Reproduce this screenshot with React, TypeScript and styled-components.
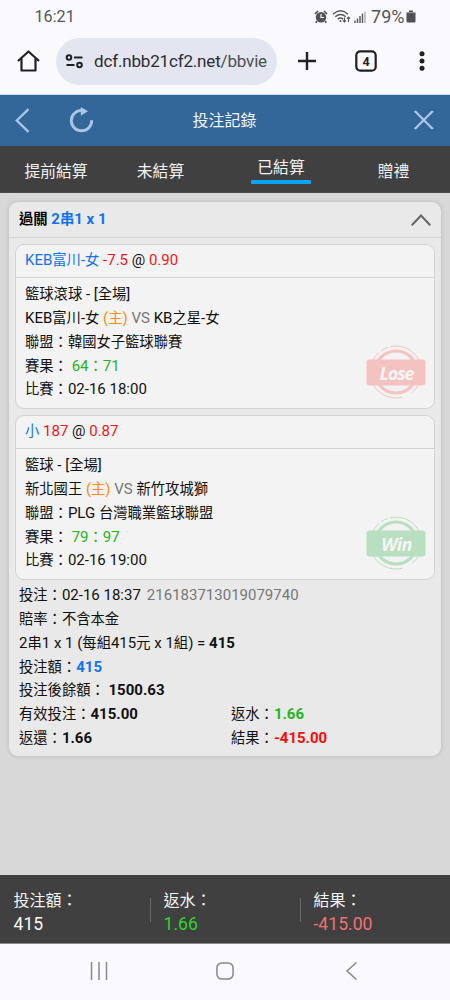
import React from "react";
import styled, { createGlobalStyle } from "styled-components";

const Global = createGlobalStyle`
  * { box-sizing: border-box; }
  body {
    margin: 0;
    background: #d8d8d8;
    font-family: Roboto, "Noto Sans CJK TC", sans-serif;
    color: #111;
  }
`;

const Screen = styled.div`
  width: 450px;
  height: 1000px;
  display: flex;
  flex-direction: column;
  overflow: hidden;
`;

const BrowserChrome = styled.header`
  height: 95px;
  flex: none;
  background: #faf9fe;
  border-bottom: 1px solid #cfdcf0;
`;

const StatusBar = styled.div`
  height: 37px;
  padding: 0 34px 4px 34.5px;
  display: flex;
  align-items: center;
  justify-content: space-between;
  font-size: 16.2px;
  line-height: 20px;
  color: #55555a;
`;

const StatusIcons = styled.div`
  display: flex;
  align-items: center;
`;

const Battery = styled.span`
  margin-left: 5px;
  display: flex;
  align-items: center;
  gap: 1.5px;
  font-size: 18px;
  white-space: nowrap;
  svg { flex: none; }
`;

const AddressRow = styled.div`
  height: 48px;
  display: flex;
  align-items: center;
  padding: 0 20px 0 17px;
`;

const AddressPill = styled.div`
  width: 221px;
  height: 47px;
  margin: 0 20px 0 16px;
  padding: 0 9px;
  border-radius: 24px;
  background: #e3e6f0;
  display: flex;
  align-items: center;
  gap: 10px;
  font-size: 17px;
  letter-spacing: -0.17px;
  color: #2b2c31;
  svg { flex: none; }
`;

const Url = styled.span`
  white-space: nowrap;
  span { color: #4c4d53; }
`;

const Spacer = styled.span<{ $w: number }>`
  flex: none;
  width: ${(p) => p.$w}px;
`;

const TitleBar = styled.div`
  height: 51px;
  flex: none;
  background: #336699;
  padding: 0 15px 0 14px;
  display: grid;
  grid-template-columns: 100px 1fr 100px;
  align-items: center;
  color: #a9c6e6;
`;

const TitleActions = styled.div<{ $end?: boolean }>`
  display: flex;
  align-items: center;
  gap: 37px;
  justify-content: ${(p) => (p.$end ? "flex-end" : "flex-start")};
`;

const Title = styled.h1`
  margin: 0;
  font-size: 16px;
  font-weight: 400;
  line-height: 24px;
  text-align: center;
  color: #f4f7fb;
`;

const Tabs = styled.nav`
  height: 47px;
  flex: none;
  background: #404040;
  display: grid;
  grid-template-columns: 112px 97px 144px 81px;
  border-bottom: 1px solid #4a4a4a;
`;

const Tab = styled.div<{ $active?: boolean }>`
  display: flex;
  flex-direction: column;
  align-items: center;
  padding-top: ${(p) => (p.$active ? 10 : 14)}px;
  font-size: 15.8px;
  line-height: 24px;
  color: #f2f2f2;
  &::after {
    content: "";
    display: ${(p) => (p.$active ? "block" : "none")};
    width: 60px;
    height: 3.5px;
    border-radius: 1px;
    background: #0aa5f5;
  }
`;

const Content = styled.main`
  height: 682px;
  flex: none;
  padding: 9px 9px 0;
  background: #d8d8d8;
`;

const TicketCard = styled.section`
  width: 432px;
  height: 554px;
  border-radius: 9px;
  background: #e9e9e9;
  box-shadow: 0 0 5px rgba(0, 0, 0, 0.14);
  font-size: 14.3px;
  line-height: 23.85px;
`;

const TicketHeader = styled.div`
  height: 36px;
  padding: 0 10px;
  border-bottom: 1px solid #d3d3d3;
  display: flex;
  align-items: center;
  justify-content: space-between;
  font-weight: 700;
  color: #000;
`;

const Legs = styled.div`
  padding: 6px 6px 0;
  display: flex;
  flex-direction: column;
  gap: 6px;
`;

const Leg = styled.article`
  position: relative;
  height: 165px;
  border: 1px solid #d3d3d3;
  border-radius: 9px;
  background: #f3f3f3;
`;

const LegHeader = styled.div`
  height: 33px;
  padding: 4px 9px 0;
  border-bottom: 1px solid #d3d3d3;
`;

const LegBody = styled.div`
  padding: 5px 9px 0;
`;

const Line = styled.div`
  height: 23.85px;
  white-space: pre;
`;

const Latin = styled.span`
  font-size: 15px;
  line-height: 20px;
`;

const TicketNumber = styled.span`
  margin-left: 6px;
`;

const Stamp = styled.div`
  position: absolute;
  right: 8px;
  bottom: 9px;
  width: 60px;
  height: 54px;
`;

const Summary = styled.div`
  padding: 4px 10px 0;
`;

const SplitLine = styled(Line)`
  display: grid;
  grid-template-columns: 212px 1fr;
`;

type Tone = "blue" | "red" | "loss" | "green" | "orange" | "gray";
const tones: Record<Tone, string> = {
  blue: "#1472f2",
  red: "#f51616",
  loss: "#fb0a0a",
  green: "#25b51e",
  orange: "#fb8c12",
  gray: "#777",
};

const InkSpan = styled.span<{ $tone?: Tone; $bold?: boolean }>`
  color: ${(p) => (p.$tone ? tones[p.$tone] : "inherit")};
  font-weight: ${(p) => (p.$bold ? 700 : "inherit")};
`;

/* Latin letters and digits are set slightly larger than the Chinese text. */
function Ink({ tone, bold, children }: { tone?: Tone; bold?: boolean; children: string }) {
  return (
    <InkSpan $tone={tone} $bold={bold}>
      {children
        .split(/([\x20-\x7e]+)/)
        .filter(Boolean)
        .map((run, i) => (/^[\x20-\x7e]/.test(run) ? <Latin key={i}>{run}</Latin> : run))}
    </InkSpan>
  );
}

const Totals = styled.footer`
  height: 69px;
  flex: none;
  background: #404040;
  border-bottom: 1px solid #8b8b8e;
  display: grid;
  grid-template-columns: repeat(3, 150px);
`;

const Total = styled.div<{ $color: string }>`
  padding: 14px 0 0 13.5px;
  background: linear-gradient(#686868, #686868) left 23px / 1px 24px no-repeat;
  font-size: 16px;
  line-height: 24px;
  color: #f4f4f4;
  &:first-child { background: none; }
  strong {
    display: block;
    font-weight: 400;
    font-size: 17.6px;
    line-height: 23px;
    color: ${(p) => p.$color};
  }
`;

const SystemNav = styled.div`
  height: 56px;
  flex: none;
  background: #faf9fe;
  display: flex;
  align-items: center;
  justify-content: center;
  gap: 108px;
  padding: 0 0 2px 0;
`;

function ResultStamp({ label }: { label: "Lose" | "Win" }) {
  const color = label === "Lose" ? "#f5c2c2" : "#b8dfbf";
  return (
    <Stamp>
      <svg width="60" height="54" viewBox="0 0 60 54">
        <g fill="none" stroke={color}>
          <circle cx="30" cy="27" r="21" strokeWidth="3" />
          <path
            strokeWidth="1"
            d="M24 1.9A26 26 0 0 1 54 17M15 5.8A26 26 0 0 1 22 2.4M6 17A26 26 0 0 1 13 7.3M6 37A26 26 0 0 0 36 52.3M54 37A26 26 0 0 1 45.500 47.900"
          />
        </g>
        <rect x="0.500" y="14.500" width="59" height="26" rx="3" fill={color} />
        <text
          x="30.500"
          y="34.500"
          textAnchor="middle"
          fontFamily="Open Sans, Noto Sans, sans-serif"
          fontSize="18"
          letterSpacing={label === "Lose" ? -1.1 : -0.6}
          fontStyle="italic"
          fontWeight="700"
          fill="#f6f5f3"
        >
          {label}
        </text>
      </svg>
    </Stamp>
  );
}

interface LegData {
  pick: string;
  line: string;
  odds: string;
  market: string;
  home: string;
  away: string;
  league: string;
  score: string;
  time: string;
  result: "Lose" | "Win";
}

const legs: LegData[] = [
  {
    pick: "KEB富川-女",
    line: "-7.5",
    odds: "0.90",
    market: "籃球滾球 - [全場]",
    home: "KEB富川-女",
    away: "KB之星-女",
    league: "韓國女子籃球聯賽",
    score: "64：71",
    time: "02-16 18:00",
    result: "Lose",
  },
  {
    pick: "小",
    line: "187",
    odds: "0.87",
    market: "籃球 - [全場]",
    home: "新北國王",
    away: "新竹攻城獅",
    league: "PLG 台灣職業籃球聯盟",
    score: "79：97",
    time: "02-16 19:00",
    result: "Win",
  },
];

function LegCard({ leg }: { leg: LegData }) {
  return (
    <Leg>
      <LegHeader>
        <Line>
          <Ink tone="blue">{leg.pick}</Ink>
          <Ink tone="red">{` ${leg.line}`}</Ink>
          <Ink>{" @ "}</Ink>
          <Ink tone="red">{leg.odds}</Ink>
        </Line>
      </LegHeader>
      <LegBody>
        <Line>
          <Ink>{leg.market}</Ink>
        </Line>
        <Line>
          <Ink>{`${leg.home} `}</Ink>
          <Ink tone="orange">(主)</Ink>
          <Ink tone="gray">{" VS "}</Ink>
          <Ink>{leg.away}</Ink>
        </Line>
        <Line>
          <Ink>{`聯盟：${leg.league}`}</Ink>
        </Line>
        <Line>
          <Ink>{"賽果： "}</Ink>
          <Ink tone="green">{leg.score}</Ink>
        </Line>
        <Line>
          <Ink>{`比賽：${leg.time}`}</Ink>
        </Line>
      </LegBody>
      <ResultStamp label={leg.result} />
    </Leg>
  );
}

export default function App() {
  return (
    <Screen lang="zh-TW">
      <Global />
      <BrowserChrome>
        <StatusBar>
          <span>16:21</span>
          <StatusIcons>
            <svg width="14" height="14" viewBox="0 0 14 14">
              <circle cx="7" cy="7.200" r="5.200" fill="#505055" />
              <path d="M1 4 4 1M10 1l3 3M3 11l-1.200 1.800M11 11l1.200 1.800" stroke="#505055" strokeWidth="1.700" />
              <path d="M7 4v3.500h3" fill="none" stroke="#faf9fe" strokeWidth="1.200" />
            </svg>
            <Spacer $w={4} />
            <svg width="20" height="15" viewBox="0 0 20 15" fill="none" stroke="#55555a" strokeWidth="1.300">
              <path d="M1 5.200q7.500-7 15 0M3.300 7.800q5.200-4.600 10.400 0M5.700 10.200q2.800-2.400 5.600 0" />
              <circle cx="8.500" cy="12" r="1" fill="#55555a" stroke="none" />
              <path d="M12.500 8.500v4.500m-1.700-1.700 1.700 1.700 1.500-1.600M16.500 13V8m-1.600 1.700L16.500 8l1.600 1.700" strokeWidth="1.100" />
            </svg>
            <Spacer $w={2} />
            <svg width="12" height="14" viewBox="0 0 12 14">
              <path d="M1 10.500V13M3.500 8.500V13M6 6V13M8.500 3.500V13" stroke="#606065" strokeWidth="1.500" />
              <path d="M11 1.500V13" stroke="#b4b4b9" strokeWidth="1.500" />
            </svg>
            <Battery>
              79%
              <svg width="10" height="13" viewBox="0 0 10 13">
                <path d="M3 .5h4V2h1.500q1 0 1 1v8.500q0 1-1 1h-7q-1 0-1-1V3q0-1 1-1H3z" fill="#505055" />
                <path d="M1 2.600h8" stroke="#9b9ba0" strokeWidth="1.200" />
              </svg>
            </Battery>
          </StatusIcons>
        </StatusBar>
        <AddressRow>
          <svg width="23" height="24" viewBox="0 0 23 24" fill="none" stroke="#202126" strokeWidth="2.200" strokeLinejoin="round">
            <path d="M1 12 11.500 2.500 22 12M4.500 9.800v11.700h14V9.800" />
          </svg>
          <AddressPill>
            <svg width="19" height="15" viewBox="0 0 19 15" fill="none" stroke="#202126" strokeWidth="2">
              <circle cx="4" cy="3.500" r="2.300" />
              <path d="M9 3.500h8.500M1.500 11H9.500" />
              <circle cx="14.500" cy="11" r="2.300" />
            </svg>
            <Url>
              dcf.nbb21cf2.net<span>/bbvie</span>
            </Url>
          </AddressPill>
          <svg width="20" height="20" viewBox="0 0 20 20" stroke="#202126" strokeWidth="2.400">
            <path d="M10 1v18M1 10h18" />
          </svg>
          <Spacer $w={38} />
          <svg width="22" height="22" viewBox="0 0 22 22">
            <rect x="1.300" y="1.300" width="19.400" height="19.400" rx="4" fill="none" stroke="#202126" strokeWidth="2.200" />
            <text x="11" y="15.500" textAnchor="middle" fontFamily="Roboto" fontWeight="700" fontSize="12.500" fill="#202126">4</text>
          </svg>
          <Spacer $w={42} />
          <svg width="6" height="20" viewBox="0 0 6 20" fill="#202126">
            <circle cx="3" cy="2.800" r="2.500" />
            <circle cx="3" cy="10" r="2.500" />
            <circle cx="3" cy="17.200" r="2.500" />
          </svg>
        </AddressRow>
      </BrowserChrome>

      <TitleBar>
        <TitleActions>
          <svg width="16" height="26" viewBox="0 0 16 26" fill="none" stroke="currentColor" strokeWidth="2.300">
            <path d="M14.500 1.200 2.800 12.500l11.700 11.400" />
          </svg>
          <svg width="28" height="28" viewBox="0 0 28 28">
            <path d="M15.500 3.400H14.500A10.200 10.200 0 1 0 24.700 13.300" fill="none" stroke="currentColor" strokeWidth="2.900" />
            <path d="M13.800 0 21 4.200 13.800 8.800z" fill="currentColor" />
          </svg>
        </TitleActions>
        <Title>投注記錄</Title>
        <TitleActions $end>
          <svg width="22" height="22" viewBox="0 0 22 22" fill="none" stroke="currentColor" strokeWidth="2.300">
            <path d="M1.800 1l18 18M19.800 1 1.800 19" />
          </svg>
        </TitleActions>
      </TitleBar>

      <Tabs>
        <Tab>提前結算</Tab>
        <Tab>未結算</Tab>
        <Tab $active>已結算</Tab>
        <Tab>贈禮</Tab>
      </Tabs>

      <Content>
        <TicketCard>
          <TicketHeader>
            <Line>
              <Ink>{"過關 "}</Ink>
              <Ink tone="blue">2串1 x 1</Ink>
            </Line>
            <svg width="20" height="12" viewBox="0 0 20 12" fill="none" stroke="#666" strokeWidth="2">
              <path d="M.8 11.200 10 1.500l9.200 9.700" />
            </svg>
          </TicketHeader>
          <Legs>
            {legs.map((leg) => (
              <LegCard key={leg.pick} leg={leg} />
            ))}
          </Legs>
          <Summary>
            <Line>
              <Ink>{"投注：02-16 18:37"}</Ink>
              <TicketNumber>
                <Ink tone="gray">216183713019079740</Ink>
              </TicketNumber>
            </Line>
            <Line>
              <Ink>賠率：不含本金</Ink>
            </Line>
            <Line>
              <Ink>{"2串1 x 1 (每組415元 x 1組) = "}</Ink>
              <Ink bold>415</Ink>
            </Line>
            <Line>
              <Ink>投注額：</Ink>
              <Ink bold tone="blue">415</Ink>
            </Line>
            <Line>
              <Ink>{"投注後餘額： "}</Ink>
              <Ink bold>1500.63</Ink>
            </Line>
            <SplitLine>
              <span>
                <Ink>有效投注：</Ink>
                <Ink bold>415.00</Ink>
              </span>
              <span>
                <Ink>返水：</Ink>
                <Ink bold tone="green">1.66</Ink>
              </span>
            </SplitLine>
            <SplitLine>
              <span>
                <Ink>返還：</Ink>
                <Ink bold>1.66</Ink>
              </span>
              <span>
                <Ink>結果：</Ink>
                <Ink bold tone="loss">-415.00</Ink>
              </span>
            </SplitLine>
          </Summary>
        </TicketCard>
      </Content>

      <Totals>
        <Total $color="#f8f8f8">
          投注額：<strong>415</strong>
        </Total>
        <Total $color="#2fd42a">
          返水：<strong>1.66</strong>
        </Total>
        <Total $color="#f07070">
          結果：<strong>-415.00</strong>
        </Total>
      </Totals>

      <SystemNav>
        <svg width="18" height="18" viewBox="0 0 18 18" stroke="#88888c" strokeWidth="1.500">
          <path d="M1.500 0v18M9 0v18M16.500 0v18" />
        </svg>
        <svg width="18" height="18" viewBox="0 0 18 18" fill="none" stroke="#88888c" strokeWidth="1.500">
          <rect x=".9" y=".9" width="16.200" height="16.200" rx="5" />
        </svg>
        <svg width="18" height="18" viewBox="0 0 18 18" fill="none" stroke="#88888c" strokeWidth="1.500">
          <path d="M14.500 .5 5 9 14.500 17.500" />
        </svg>
      </SystemNav>
    </Screen>
  );
}
